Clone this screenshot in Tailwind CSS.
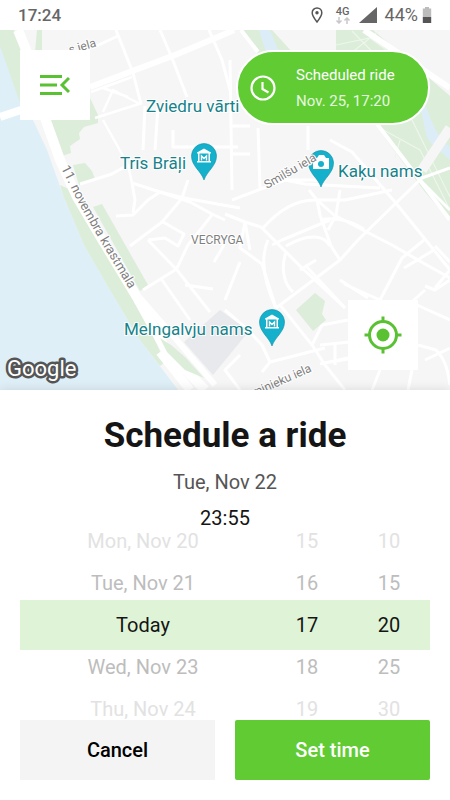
<!DOCTYPE html>
<html lang="en">

<head>
  <meta charset="UTF-8" />
  <meta name="viewport" content="width=device-width, initial-scale=1.0" />
  <script src="https://cdn.jsdelivr.net/npm/@tailwindcss/browser@4"></script>
  <title>Schedule a ride</title>
</head>

<body class="flex min-h-screen flex-col bg-white font-['Roboto',sans-serif] text-[#151515]">

  <!-- Status bar -->
  <header class="flex h-[30px] items-center justify-between px-[18px] text-[17px] leading-6 text-[#666]">
    <span class="font-medium">17:24</span>
    <div class="flex items-center">
      <svg class="mr-3 h-4 w-3" viewBox="0 0 12 16" fill="none" aria-hidden="true">
        <path d="M6 1C3.2 1 1.2 3 1.2 5.8 1.2 9 6 15 6 15s4.8-6 4.8-9.200C10.800 3 8.800 1 6 1Z" stroke="#555" stroke-width="1.500" />
        <circle cx="6" cy="5.800" r="1.700" fill="#555" />
      </svg>
      <div class="mr-2 flex flex-col items-center">
        <span class="text-[11px] leading-[10px] font-medium">4G</span>
        <svg class="h-[7px] w-4" viewBox="0 0 16 7" fill="none" stroke="#c8c8c8" stroke-width="1.500" aria-hidden="true">
          <path d="M4 0v6M1.500 3.500 4 6l2.500-2.500M12 7V1M9.500 3.500 12 1l2.500 2.500" />
        </svg>
      </div>
      <svg class="mr-2 h-4 w-[18px]" viewBox="0 0 18 16" aria-hidden="true">
        <path d="M18 0v16H0Z" fill="#666" />
      </svg>
      <span class="mr-1 text-lg leading-6">44%</span>
      <svg class="h-4 w-[10px]" viewBox="0 0 10 16" aria-hidden="true">
        <path d="M3 0h4v1.500h2.200V10H.8V1.500H3Z" fill="#bcbcbc" />
        <path d="M.8 10h8.400v6H.8Z" fill="#555" />
      </svg>
    </div>
  </header>

  <!-- Map -->
  <main class="relative h-[360px] overflow-hidden bg-[#f6f6f6]">
    <svg class="h-full w-full" viewBox="0 30 450 360" preserveAspectRatio="xMidYMid slice" role="img" aria-label="Map of Vecrīga">
      <defs>
        <path id="quay" d="M61 168 L79 204 Q101 243 136 300" />
        <g id="pin">
          <path d="M0 24C-3 15-12.500 10-12.500 0a12.500 12.500 0 0 1 25 0C12.500 10 3 15 0 24Z" fill="#15b0cb" stroke="#0f8fa5" stroke-width=".6" />
        </g>
        <g id="museum" fill="#fff">
          <path d="M-7-3.500 0-7.500l7 4v1h-14ZM-6-2.500h1.500V5H-6ZM4.500-2.500H6V5H4.500ZM-7 5H7v1.500H-7Z" />
          <path d="M-2.500 4.500V0L0 2.500 2.500 0v4.500" fill="none" stroke="#fff" stroke-width="1.400" />
        </g>
      </defs>

      <!-- River and quay -->
      <path d="M0 30H8L32 118 47 150 63 195 84 245 110 290 140 340 178 390H0Z" fill="#dfeff8" />
      <path d="M0 30H14L24 56V112L19 100 0 46Z" fill="#dcedda" />
      <path d="M37 30h5v22h-7Z" fill="#dcedda" />
      <path d="M47 118 90 98 98 115 98 123 84 127 79 133 80 139 70 146 71 153 62 156Z" fill="#dcedda" />
      <path d="M73 165 85 163 92 171 95 179 79 185Z" fill="#dcedda" />
      <path d="M60 185 71 190 95 235 140 308 165 362 160 366 140 340 110 290 84 245 63 195Z" fill="#dcedda" />
      <path d="M93 207 102 204 148 285 140 291Z" fill="#dcedda" />

      <!-- Park and canal -->
      <path d="M242 30H272L294 54H258Z" fill="#dcedda" />
      <path d="M336 30H373L450 96V221L425 192 377 127 336 60Z" fill="#dcedda" />
      <path d="M259 30H270L279 52H266Z" fill="#dcedf8" />
      <path d="M420 108C425 122 424 135 430 142L450 160V147C439 140 432 124 426 106Z" fill="#dcedf8" />
      <path d="M336 45 370 38 400 60 430 83M345 58 380 30M352 31 400 80M395 50 420 102M380 128 420 150 450 210M400 140 395 158M412 120 450 197" fill="none" stroke="#edf6eb" stroke-width="1.200" />

      <!-- Roads -->
      <g fill="none" stroke="#fff" stroke-linejoin="round">
        <g stroke-width="10">
          <path d="M18 30 31 62 45 118 60 160 77 197 100 236 138 299 165 348 205 390" />
          <path d="M0 117 30 107" stroke-width="8" />
          <path d="M422 170 450 128" stroke="#f6f6f6" />
        </g>
        <g stroke-width="6">
          <path d="M90 87 135 70 175 55 225 34 234 30" />
          <path d="M364 30 450 88" />
          <path d="M377 124 425 187 450 220" stroke-width="4" />
          <path d="M241 30 258 52" stroke-width="4" />
          <path d="M140 298 175 338 215 385" />
          <path d="M160 352 190 390" stroke-width="9" />
        </g>
        <g stroke-width="3">
          <path d="M92 48 118 36 M116 30 133 73 141 104M160 30 172 58 187 97M209 30 222 60 230 90" />
          <path d="M91 92 132 77M95 118 142 103M103 120 128 165 132 183M103 112 113 90 140 104M103 88 128 97" stroke-width="2.500" />
          <path d="M145 106 143 150M158 106 155 150M173 130V147H238M230 60 232 190M230 126H250M232 154H250" />
          <path d="M80 184 112 174 128 165M132 183 160 192 184 198 240 208M188 180 182 198M160 192 148 200 133 215 116 216M132 183 135 200 133 213" />
          <path d="M160 192 190 202 212 214 225 220M184 198 190 202M163 222 184 234 178 246 165 238 148 240" />
          <path d="M130 246 162 222 184 196M148 240 177 270 210 312M175 270 143 290M162 280 190 320M177 268 188 245 212 215M185 285 213 289M214 262 224 245" />
          <path d="M225 214 245 222 261 227 302 268 345 308M245 222 240 248 262 264 276 308M240 262 225 300M245 222 250 250" />
          <path d="M232 200 285 180 322 180M258 128 260 188M285 180 305 184 380 188M308 126V150M330 140 352 152 395 202 450 270" />
          <path d="M309 190 317 200H345L392 190M317 200 320 215 331 246 340 260M317 200 334 215 392 245 425 264 450 278" />
          <path d="M263 228C277 212 296 199 317 200M272 245 282 240 330 220M320 220C338 216 352 222 364 229M340 190 336 215 328 230" />
          <path d="M268 240C260 258 263 280 276 308M286 252C280 270 285 285 293 292M286 246C310 232 325 236 330 246" />
          <path d="M276 308 340 260 358 240 395 204 422 178 450 168M300 270 316 260M305 265 345 308" />
          <path d="M340 280 368 298M344 284 380 300 402 258 424 240M404 268 434 250M420 180 450 210" />
          <path d="M435 288 450 270M425 290 405 308M425 286 435 290 450 280M435 246 450 262M417 305 450 320" />
          <path d="M280 305 296 325 312 345 325 365 345 390M312 345 322 325 348 320M320 345 350 342M335 345V365M320 364 348 358" />
          <path d="M262 345 270 362 325 348M270 362 262 372M225 310 248 330 262 345M240 355 225 370 240 390M330 362 390 352" />
          <path d="M380 370 372 390M412 370 408 390M418 345 436 350C446 360 448 372 450 385M425 360 450 348" />
        </g>
      </g>

      <!-- Blocks -->
      <path d="M220 310 249 331 213 375 184 342Z" fill="#e8e9ed" />
      <path d="M296 310 315 293 325 301 322 314 326 320 313 331Z" fill="#dcedda" />
      <path d="M160 338 171 345 185 357 204 378 185 370 167 352Z" fill="#dcedda" />

      <!-- Pins -->
      <use href="#pin" x="204" y="156" />
      <use href="#museum" x="204" y="156" />
      <use href="#pin" x="321" y="163" />
      <path d="M313 158h4l2-3h5l2 3h3v11h-16Z" fill="#fff" />
      <circle cx="321" cy="164" r="3" fill="#15b0cb" />
      <use href="#pin" x="272" y="322" />
      <use href="#museum" x="272" y="322" />

      <!-- Street names -->
      <g fill="#7f7f7f" stroke="#fff" stroke-width="2" paint-order="stroke" font-size="12">
        <text font-size="13"><textPath href="#quay">11. novembra krastmala</textPath></text>
        <text x="70" y="54" transform="rotate(-16 70 54)">s iela</text>
        <text x="267" y="189" transform="rotate(-30 267 189)">Smilšu iela</text>
        <text x="191" y="244">VECRYGA</text>
        <text x="254" y="397" transform="rotate(-24 254 397)">minieku iela</text>
      </g>

      <!-- Places -->
      <g fill="#16828a" stroke="#fff" stroke-width="2" paint-order="stroke" font-size="17">
        <text x="146" y="112">Zviedru vārti</text>
        <text x="120" y="169">Trīs Brāļi</text>
        <text x="338" y="177">Kaķu nams</text>
        <text x="124" y="335">Melngalvju nams</text>
      </g>
      <text x="7" y="376" font-size="22" fill="#fff" stroke="#555" stroke-width="5" stroke-linejoin="round" paint-order="stroke">Google</text>
    </svg>

    <button aria-label="Menu" class="absolute top-5 left-5 flex size-[70px] items-center justify-center bg-white">
      <svg class="h-5 w-[30px]" viewBox="0 0 30 20" fill="none" stroke="#5ac232" stroke-width="3" aria-hidden="true">
        <path d="M0 1.500H22M0 10H17M0 18.500H22M29 3 22 10l7 7" />
      </svg>
    </button>

    <a href="#" class="absolute top-5 right-5 flex h-[75px] w-[194px] items-center rounded-full border-2 border-white bg-[#60cb32] pl-3 text-white">
      <svg class="mr-5 size-[26px]" viewBox="0 0 26 26" fill="none" stroke="#fff" stroke-width="2.200" aria-hidden="true">
        <circle cx="13" cy="13" r="11.500" />
        <path d="M12.500 7v7l6 3.500" />
      </svg>
      <span class="flex flex-col text-[15px] leading-[26px]">
        <span>Scheduled ride</span>
        <span class="text-white/85">Nov. 25, 17:20</span>
      </span>
    </a>

    <button aria-label="My location" class="absolute right-8 bottom-5 flex size-[70px] items-center justify-center bg-white">
      <svg class="size-[38px]" viewBox="0 0 38 38" fill="none" stroke="#5ac232" stroke-width="3" aria-hidden="true">
        <circle cx="19" cy="19" r="13.500" />
        <circle cx="19" cy="19" r="6.500" fill="#5ac232" stroke="none" />
        <path d="M19 .500v5M19 32.500v5M.500 19h5M32.500 19h5" />
      </svg>
    </button>
  </main>

  <!-- Bottom sheet -->
  <section class="relative flex flex-col bg-white px-5 pt-6 pb-5 text-center text-xl leading-6 shadow-[0_0_10px_rgba(0,0,0,0.12)]">
    <h1 class="text-[35px] leading-[44px] font-bold">Schedule a ride</h1>
    <p class="mt-3 text-[#555]">Tue, Nov 22</p>
    <p class="mt-3">23:55</p>

    <!-- Date / hour / minute picker -->
    <div class="flex h-[190px] flex-col justify-center overflow-hidden">
      <div class="grid h-[42px] shrink-0 grid-cols-5 items-center text-[#e2e2e2]">
        <span class="col-span-3">Mon, Nov 20</span><span>15</span><span>10</span>
      </div>
      <div class="grid h-[42px] shrink-0 grid-cols-5 items-center text-[#bdbdbd]">
        <span class="col-span-3">Tue, Nov 21</span><span>16</span><span>15</span>
      </div>
      <div class="relative -my-1 grid h-[50px] shrink-0 grid-cols-5 items-center bg-[#dff4d6]">
        <span class="col-span-3">Today</span><span>17</span><span>20</span>
      </div>
      <div class="grid h-[42px] shrink-0 grid-cols-5 items-center text-[#bdbdbd]">
        <span class="col-span-3">Wed, Nov 23</span><span>18</span><span>25</span>
      </div>
      <div class="grid h-[42px] shrink-0 grid-cols-5 items-center text-[#e2e2e2]">
        <span class="col-span-3">Thu, Nov 24</span><span>19</span><span>30</span>
      </div>
    </div>

    <div class="grid grid-cols-2 gap-5 font-medium">
      <button class="h-[60px] bg-[#f4f4f4] text-black">Cancel</button>
      <button class="h-[60px] rounded-xs bg-[#60cb32] text-white">Set time</button>
    </div>
  </section>

</body>

</html>
